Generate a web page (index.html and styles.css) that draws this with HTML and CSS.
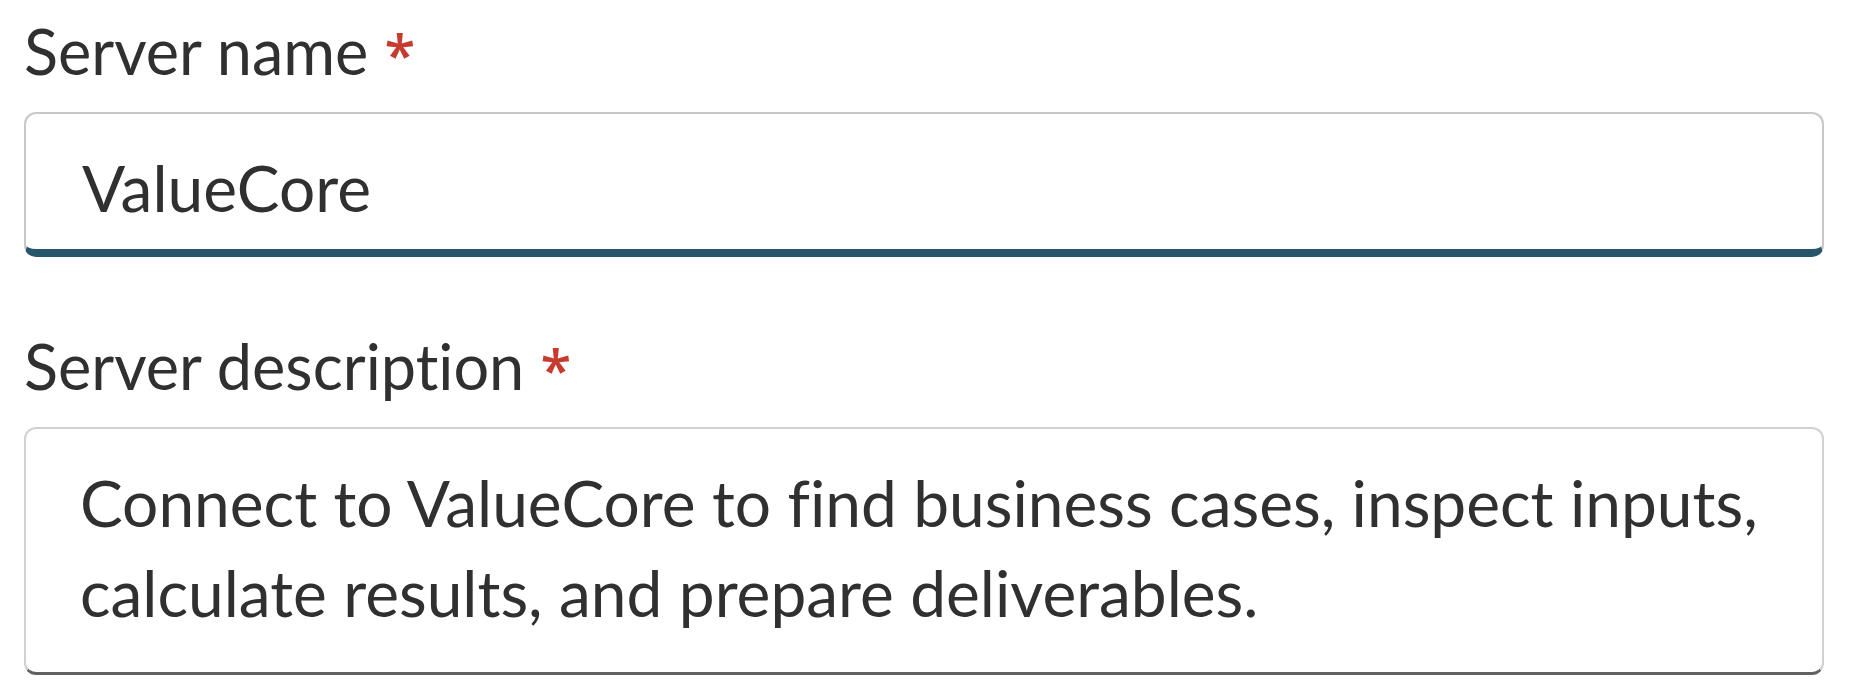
FILE: index.html
```html
<!DOCTYPE html>
<html lang="en">
<head>
    <meta charset="UTF-8">
    <meta name="viewport" content="width=device-width, initial-scale=1.0">
    <title>Server settings</title>
    <link rel="stylesheet" href="styles.css">
</head>
<body>
    <form class="serverForm">
        <div class="field">
            <label class="fieldLabel" for="serverName">Server name <span class="required">*</span></label>
            <input id="serverName" class="textInput" type="text" value="ValueCore">
        </div>
        <div class="field">
            <label class="fieldLabel" for="serverDescription">Server description <span class="required">*</span></label>
            <textarea id="serverDescription" class="textArea" rows="2">Connect to ValueCore to find business cases, inspect inputs, calculate results, and prepare deliverables.</textarea>
        </div>
    </form>
</body>
</html>
```

FILE: styles.css
```css
body {
    font-family: 'Lato', 'Open Sans', sans-serif;
    font-variant-ligatures: none;
    background-color: #ffffff;
    color: #303030;
    margin: 0;
    padding: 0;
}

.serverForm {
    display: flex;
    flex-direction: column;
    gap: 64px;
    padding: 6px 30px 0 24px;
}

.field {
    display: flex;
    flex-direction: column;
    gap: 16px;
}

.fieldLabel {
    height: 90px;
    font-size: 63px;
    line-height: 90px;
}

.required {
    color: #c73b2e;
    font-family: 'Open Sans', sans-serif;
    font-weight: 600;
    font-size: 56px;
    line-height: 0;
}

.textInput,
.textArea {
    box-sizing: border-box;
    width: 100%;
    margin: 0;
    font-family: inherit;
    font-variant-ligatures: none;
    font-size: 64px;
    line-height: 90px;
    color: #303030;
    background-color: #ffffff;
    border: 2px solid #c8c8c8;
    border-radius: 12px;
    outline: none;
}

.textInput {
    height: 145px;
    padding: 11px 56px 0;
    border-bottom: 8px solid #27566b;
}

.textArea {
    height: 248px;
    padding: 29px 40px 34px 54px;
    border-color: #d1d1d1;
    border-bottom: 3px solid #616161;
    resize: none;
    overflow: hidden;
}
```
